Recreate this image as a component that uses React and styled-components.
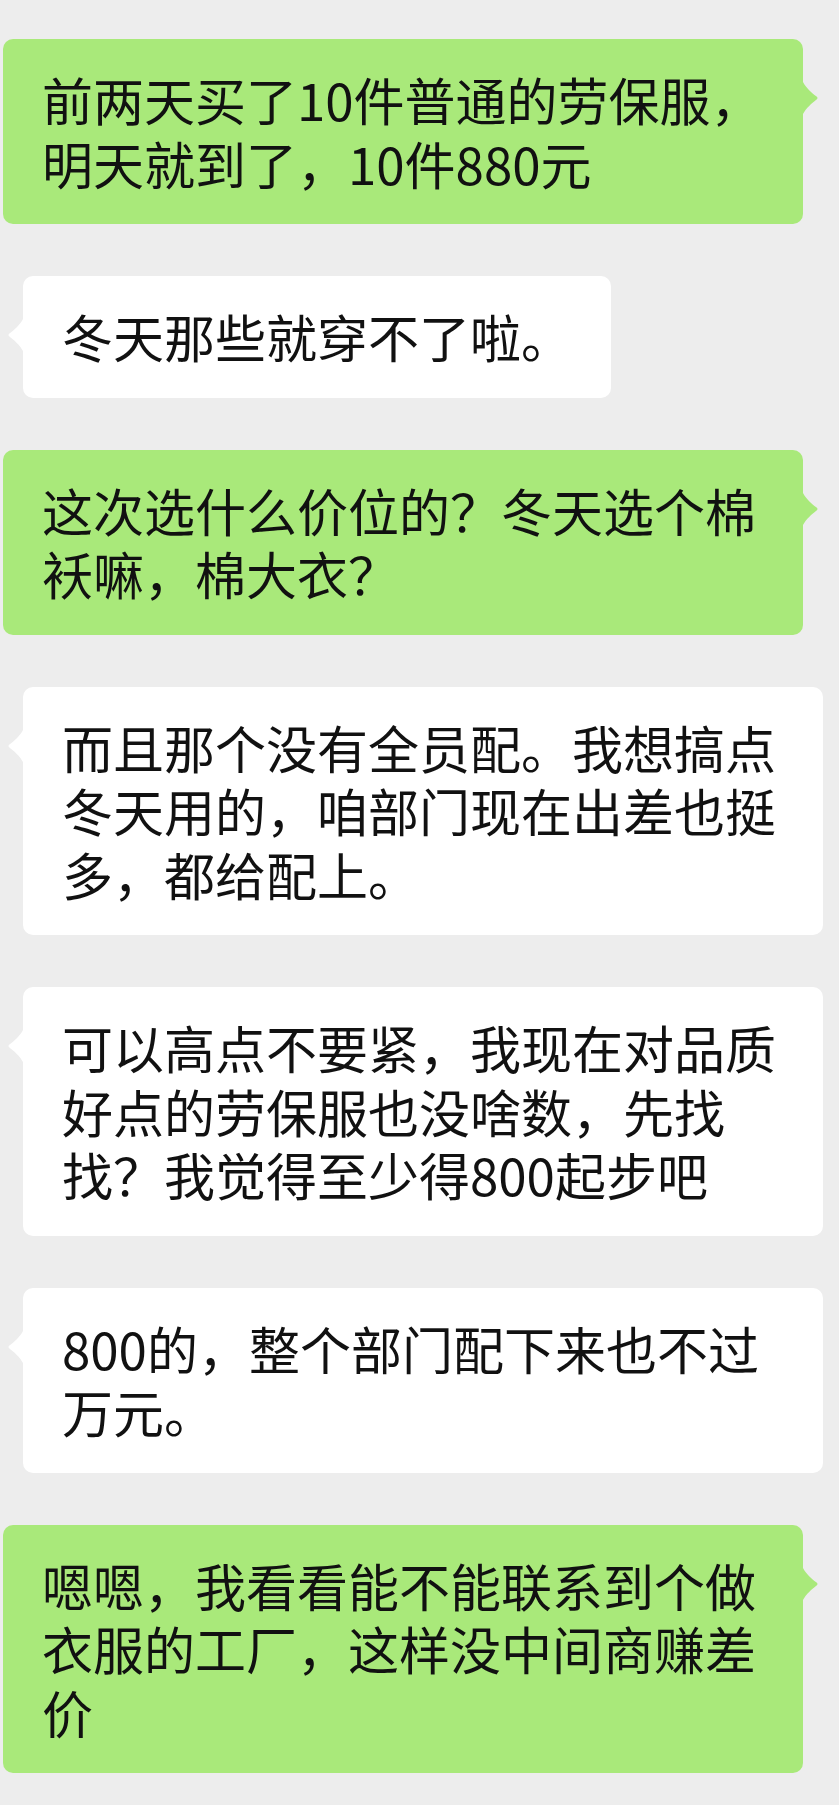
import React from "react";
import styled, { createGlobalStyle } from "styled-components";

// chat log, top to bottom
const messages = [
  { mine: true, text: "前两天买了10件普通的劳保服，明天就到了，10件880元" },
  { mine: false, text: "冬天那些就穿不了啦。" },
  { mine: true, text: "这次选什么价位的？冬天选个棉袄嘛，棉大衣？" },
  { mine: false, text: "而且那个没有全员配。我想搞点冬天用的，咱部门现在出差也挺多，都给配上。" },
  { mine: false, text: "可以高点不要紧，我现在对品质好点的劳保服也没啥数，先找找？我觉得至少得800起步吧" },
  { mine: false, text: "800的，整个部门配下来也不过万元。" },
  { mine: true, text: "嗯嗯，我看看能不能联系到个做衣服的工厂，这样没中间商赚差价" },
];

const GlobalStyle = createGlobalStyle`
  html, body {
    margin: 0;
    padding: 0;
    background: #ededed;
  }
  body {
    font-family: "Noto Sans CJK SC", "Noto Sans", sans-serif;
    -webkit-font-smoothing: antialiased;
  }
`;

const Chat = styled.div`
  display: flex;
  flex-direction: column;
  gap: 52px;
  min-height: 1805px;
  box-sizing: border-box;
  padding: 39px 0 32px;
  background: #ededed;
`;

const Row = styled.div`
  display: flex;
  justify-content: ${(p) => (p.mine ? "flex-end" : "flex-start")};
  padding: ${(p) => (p.mine ? "0 36px 0 0" : "0 0 0 23px")};
`;

const Bubble = styled.div`
  position: relative;
  box-sizing: border-box;
  max-width: 800px;
  padding: 29px 39px;
  border-radius: 10px;
  background: ${(p) => (p.mine ? "#a9e97a" : "#ffffff")};
  color: #111;
  font-size: 51px;
  line-height: 63.5px;
  font-weight: 400;
  word-break: normal;
  line-break: strict;
`;

const Tail = styled.svg`
  position: absolute;
  top: 43px;
  width: 15px;
  height: 32px;
  ${(p) => (p.mine ? "left: 100%;" : "right: 100%; transform: scaleX(-1);")}
  fill: ${(p) => (p.mine ? "#a9e97a" : "#ffffff")};
`;

const BubbleTail = ({ mine }) => (
  <Tail mine={mine} viewBox="0 0 15 32">
    <path d="M0 0 C3 6 9 11 13.6 14.6 Q15.4 16 13.6 17.4 C9 21 3 26 0 32 Z" />
  </Tail>
);

const App = () => {
  return (
    <>
      <GlobalStyle />
      <Chat>
        {messages.map((m, idx) => (
          <Row key={idx} mine={m.mine}>
            <Bubble mine={m.mine}>
              <BubbleTail mine={m.mine} />
              {m.text}
            </Bubble>
          </Row>
        ))}
      </Chat>
    </>
  );
};

export default App;
